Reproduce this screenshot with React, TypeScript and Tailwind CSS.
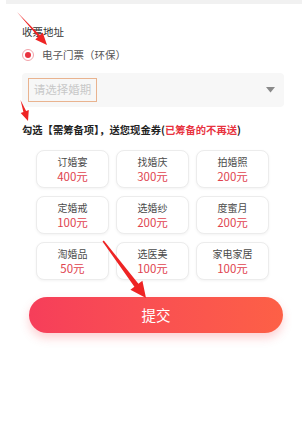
import React from 'react';

const items = [
  { name: '订婚宴', price: '400元' },
  { name: '找婚庆', price: '300元' },
  { name: '拍婚照', price: '200元' },
  { name: '定婚戒', price: '100元' },
  { name: '选婚纱', price: '200元' },
  { name: '度蜜月', price: '200元' },
  { name: '淘婚品', price: '50元' },
  { name: '选医美', price: '100元' },
  { name: '家电家居', price: '100元' },
];

const App: React.FC = () => {
  return (
    <div
      className="relative w-[308px] h-[426px] bg-white overflow-hidden"
      style={{ fontFamily: '"Noto Sans CJK SC", "Noto Sans", sans-serif' }}
    >
      <div className="h-[4px] mx-[6px] bg-[#f1f1f1]" />

      <div className="pl-[22px] pr-[24px]">
        <p className="mt-[20px] text-[10.5px] leading-[16px] text-[#333]">收票地址</p>

        <div className="mt-[7px] flex items-center h-[16px]">
          <span className="w-[12px] h-[12px] rounded-full border border-[#f2a3aa] flex items-center justify-center">
            <span className="w-[6px] h-[6px] rounded-full bg-[#e8333f]" />
          </span>
          <span className="ml-[8px] text-[10.5px] text-[#555]">电子门票（环保）</span>
        </div>

        <div className="mt-[10px] h-[34px] bg-[#f7f7f7] rounded-[4px] flex items-center pl-[6px] pr-[9px]">
          <div className="h-[24px] w-[69px] border border-[#e9b38f] flex items-center justify-center text-[11.5px] text-[#c8c8c8]">
            请选择婚期
          </div>
          <div className="flex-1" />
          <svg width="9" height="6" viewBox="0 0 9 6">
            <path d="M0 0 L9 0 L4.5 5.5 Z" fill="#8a8a8a" />
          </svg>
        </div>

        <p className="mt-[15px] text-[10.3px] leading-[16px] font-bold text-[#222] whitespace-nowrap">
          勾选【需筹备项】，送您现金券(<span className="text-[#e8333f]">已筹备的不再送</span>)
        </p>

        <div className="mt-[12px] ml-[14px] w-[233px] grid grid-cols-3 gap-x-[7px] gap-y-[8px]">
          {items.map((it) => (
            <div
              key={it.name}
              className="h-[38px] rounded-[8px] border border-[#ececec] bg-white shadow-[0_1px_3px_rgba(0,0,0,0.05)] flex flex-col items-center justify-center"
            >
              <span className="text-[10px] leading-[14px] text-[#4a4a4a]">{it.name}</span>
              <span className="text-[11.5px] leading-[15px] text-[#e0434e]">{it.price}</span>
            </div>
          ))}
        </div>
      </div>

      <button className="mt-[17px] ml-[29px] w-[254px] h-[36px] rounded-full bg-gradient-to-r from-[#f63e5a] to-[#fd6046] text-white text-[14.5px] shadow-[0_5px_10px_rgba(246,70,80,0.25)] flex items-center justify-center">
        提交
      </button>

      <svg className="absolute inset-0 pointer-events-none" width="308" height="426" viewBox="0 0 308 426">
        <polygon
          points="17,12 38.1,36.8 35.3,39.4 47,45 42.7,32.6 39.9,35.2"
          fill="#ee2424"
        />
        <polygon
          points="20.5,100 23.4,112 20.7,112.9 28,121 28.8,110.1 26.1,111"
          fill="#ee2424"
        />
        <polygon
          points="102.5,241.5 134.4,286.7 130.4,289.7 146,298 142.4,280.7 138.4,283.7 103.8,240.6"
          fill="#ee2424"
        />
      </svg>
    </div>
  );
};

export default App;
